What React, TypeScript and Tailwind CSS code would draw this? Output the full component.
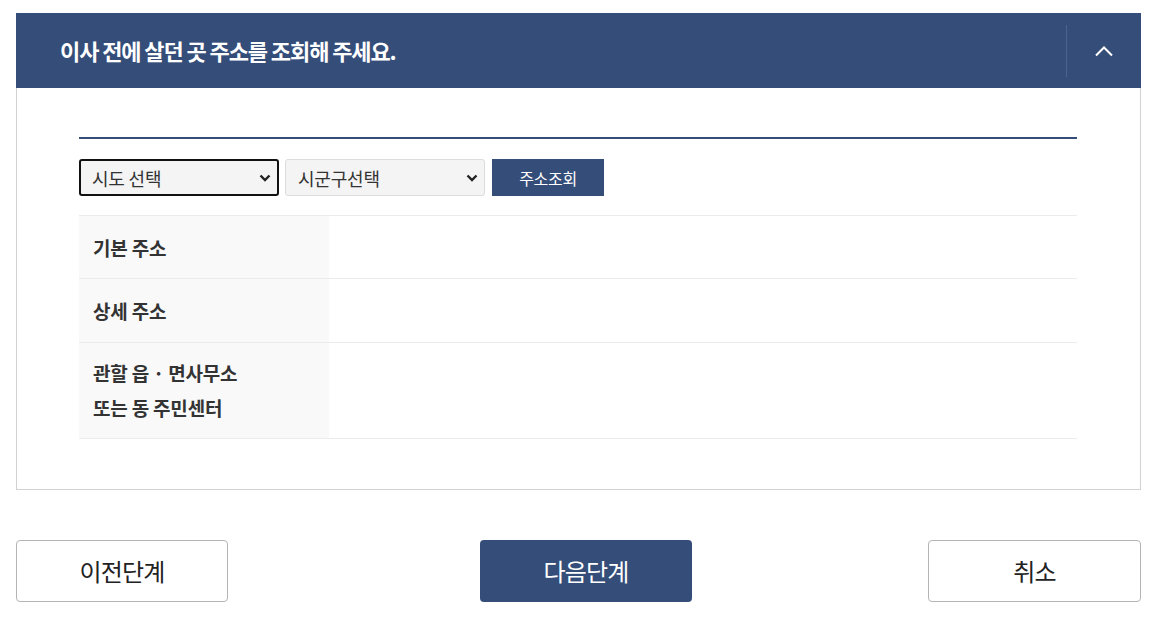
import React from "react";

const font = { fontFamily: '"Noto Sans CJK KR", "Noto Sans", sans-serif' };

function Select({ label, focused }: { label: string; focused?: boolean }) {
  return (
    <div
      className={
        "relative w-[200px] h-[37px] rounded-[3px] bg-[#f4f4f4] flex items-center pl-[11px] " +
        (focused ? "border-2 border-[#111]" : "border border-[#dcdcdc] pl-[12px]")
      }
    >
      <span className="text-[18px] text-[#333] leading-none tracking-[-0.2px]">{label}</span>
      <svg
        className="absolute right-[6px] top-1/2 -translate-y-1/2"
        width="12"
        height="9"
        viewBox="0 0 12 9"
      >
        <path d="M1.5 2 L6 6.5 L10.5 2" fill="none" stroke="#222" strokeWidth="2.4" />
      </svg>
    </div>
  );
}

function Row({ label, h }: { label: React.ReactNode; h: string }) {
  return (
    <div className={"flex border-b border-[#ececec] " + h}>
      <div className="w-[250px] bg-[#f9f9f9] flex items-center pl-[14px] text-[19px] font-bold text-[#333] leading-[35px] tracking-[-0.2px]">
        {label}
      </div>
      <div className="flex-1 bg-white" />
    </div>
  );
}

export default function App() {
  return (
    <div className="w-[1153px] h-[618px] bg-white pt-[13px] pl-[16px] pr-[12px]" style={font}>
      <div className="w-[1125px]">
        <div className="h-[75px] bg-[#344d79] flex items-center">
          <div className="flex-1 pl-[44px] text-white text-[22px] font-bold tracking-[-1.1px]">
            이사 전에 살던 곳 주소를 조회해 주세요.
          </div>
          <div className="w-px h-[52px] bg-[#4a6390]" />
          <div className="w-[74px] flex items-center justify-center">
            <svg width="20" height="12" viewBox="0 0 20 12">
              <path d="M2 10.5 L10 2.5 L18 10.5" fill="none" stroke="#fff" strokeWidth="2" />
            </svg>
          </div>
        </div>
        <div className="border border-t-0 border-[#d2d2d2] pl-[62px] pr-[63px] pt-[49px] pb-[50px]">
          <div className="h-[2px] bg-[#344d79]" />
          <div className="flex items-center gap-[6px] mt-[20px]">
            <Select label="시도 선택" focused />
            <Select label="시군구선택" />
            <div className="ml-px w-[112px] h-[37px] bg-[#344d79] text-white text-[16px] flex items-center justify-center tracking-[-0.3px]">
              주소조회
            </div>
          </div>
          <div className="mt-[19px] border-t border-[#ececec]">
            <Row label="기본 주소" h="h-[63px]" />
            <Row label="상세 주소" h="h-[64px]" />
            <Row
              label={
                <div className="-mt-[2px]">
                  관할 읍 · 면사무소
                  <br />
                  또는 동 주민센터
                </div>
              }
              h="h-[96px]"
            />
          </div>
        </div>
        <div className="flex justify-between mt-[50px]">
          <div className="w-[212px] h-[62px] rounded-[4px] border border-[#b5b5b5] bg-white flex items-center justify-center text-[24px] text-[#222] tracking-[-0.8px]">
            이전단계
          </div>
          <div className="ml-[16px] w-[212px] h-[62px] rounded-[4px] bg-[#344d79] flex items-center justify-center text-[24px] text-white tracking-[-0.8px]">
            다음단계
          </div>
          <div className="w-[213px] h-[62px] rounded-[4px] border border-[#b5b5b5] bg-white flex items-center justify-center text-[24px] text-[#222] tracking-[-0.8px]">
            취소
          </div>
        </div>
      </div>
    </div>
  );
}
